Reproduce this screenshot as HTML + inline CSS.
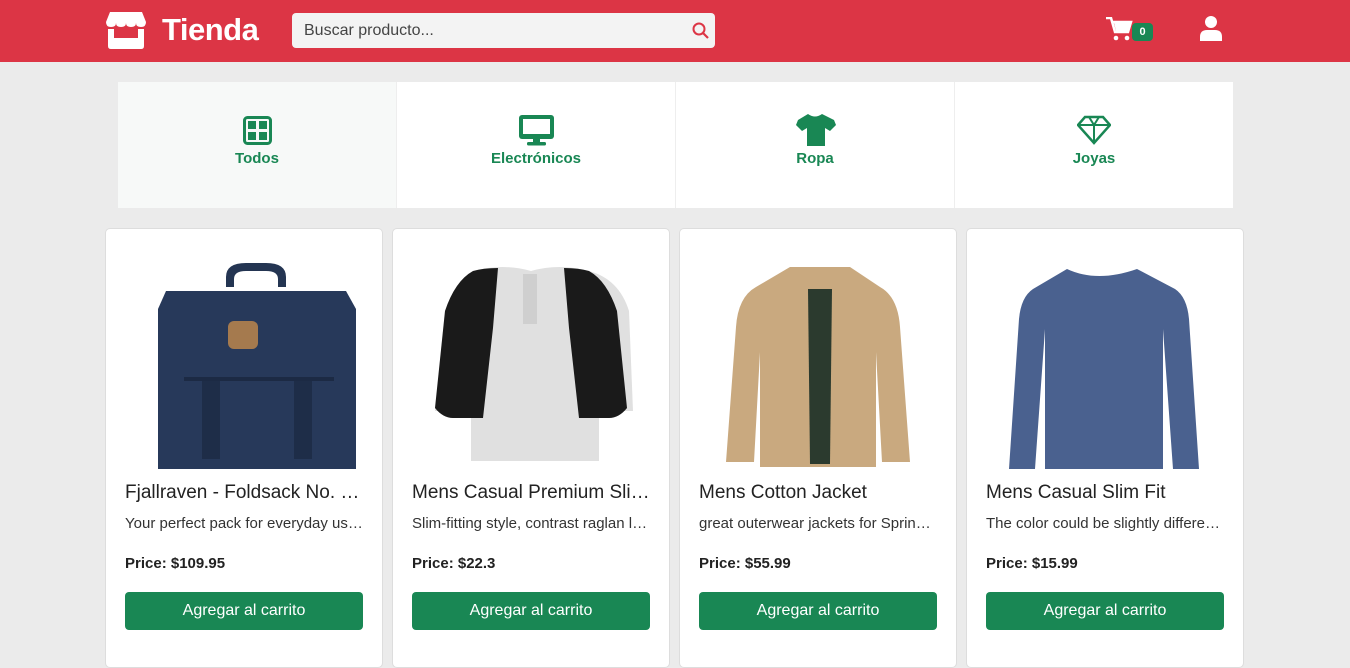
<!DOCTYPE html>
<html><head><meta charset="utf-8"><style>
*{box-sizing:border-box;margin:0;padding:0}
body{width:1350px;height:647px;overflow:hidden;background:#ebebeb;font-family:"Liberation Sans",sans-serif;position:relative}
.hdr{position:absolute;left:0;top:0;width:1350px;height:62px;background:#dc3545}
.logo{position:absolute;left:162px;top:12px;color:#fff;font-weight:bold;font-size:31px;letter-spacing:-0.5px}
.search{position:absolute;left:292px;top:13px;width:423px;height:35px;background:#f3f3f3;border-radius:4px;font-size:16px;color:#444;padding:9px 12px}
.cats{position:absolute;left:118px;top:82px;width:1115px;height:126px;background:#fff;display:flex}
.cat{flex:1;border-right:1px solid #eee;text-align:center;color:#198754;font-weight:bold;font-size:15px;padding-top:31px}
.cat:last-child{border:none}
.ic{height:34px;display:flex;justify-content:center;align-items:center;margin-bottom:3px}
.card{position:absolute;top:228px;width:278px;height:440px;background:#fff;border:1px solid #ddd;border-radius:5px}
.card .img{position:absolute;left:20px;top:30px;width:238px;height:210px}
.t{position:absolute;left:19px;top:253px;font-size:19px;color:#222;width:240px;white-space:nowrap;overflow:hidden;text-overflow:ellipsis}
.d{position:absolute;left:19px;top:286px;font-size:15px;color:#333;width:238px;white-space:nowrap;overflow:hidden;text-overflow:ellipsis}
.p{position:absolute;left:19px;top:326px;font-size:15px;font-weight:bold;color:#222}
.b{position:absolute;left:19px;top:363px;width:238px;height:38px;background:#198754;border-radius:4px;color:#fff;font-size:16px;text-align:center;line-height:38px}
</style></head><body>
<div class="hdr">
<svg style="position:absolute;left:106px;top:12px" width="40" height="37" viewBox="0 0 40 37"><path d="M4 0h32l4 10q0 5-5 5q-5 0-5-4q0 4-5 4q-5 0-5-4q0 4-5 4q-5 0-5-4q0 4-5 4q-5 0-5-5z" fill="#fff"/><path d="M2 17h6v9h24v-9h6v17q0 3-3 3H5q-3 0-3-3z" fill="#fff"/></svg>
<div class="logo">Tienda</div>
<div class="search">Buscar producto...<svg style="position:absolute;right:6px;top:9px" width="17" height="17" viewBox="0 0 17 17"><circle cx="7" cy="7" r="5.5" fill="none" stroke="#dc3545" stroke-width="2"/><path d="M11 11l5 5" stroke="#dc3545" stroke-width="2.2"/></svg></div>
<svg style="position:absolute;left:1106px;top:17px" width="28" height="24" viewBox="0 0 28 24"><path d="M0 1h5l4 14h13l3-10H7" fill="none" stroke="#fff" stroke-width="2.5"/><path d="M8 6h16l-2.5 8H10z" fill="#fff"/><circle cx="10" cy="21" r="2.3" fill="#fff"/><circle cx="21" cy="21" r="2.3" fill="#fff"/></svg>
<div style="position:absolute;left:1132px;top:23px;width:21px;height:18px;background:#198754;border-radius:4px;color:#fff;font-size:11px;font-weight:bold;text-align:center;line-height:18px">0</div>
<svg style="position:absolute;left:1200px;top:16px" width="22" height="25" viewBox="0 0 22 25"><circle cx="11" cy="6" r="6" fill="#fff"/><path d="M0 25v-4q0-7 7-7h8q7 0 7 7v4z" fill="#fff"/></svg>
</div>
<div class="cats">
<div class="cat" style="background:#f7f9f8"><div class="ic"><svg width="29" height="29" viewBox="0 0 29 29"><rect x="1.5" y="1.5" width="26" height="26" rx="3" fill="none" stroke="#198754" stroke-width="3"/><rect x="5" y="5" width="8" height="8" fill="#198754"/><rect x="16" y="5" width="8" height="8" fill="#198754"/><rect x="5" y="16" width="8" height="8" fill="#198754"/><rect x="16" y="16" width="8" height="8" fill="#198754"/></svg></div>Todos</div>
<div class="cat"><div class="ic"><svg width="37" height="32" viewBox="0 0 37 32"><rect x="1" y="1" width="35" height="24" rx="3" fill="#198754"/><rect x="5" y="5" width="27" height="15" fill="#fff"/><rect x="15" y="25" width="7" height="3" fill="#198754"/><rect x="9" y="28" width="19" height="3.5" rx="1.5" fill="#198754"/></svg></div>Electrónicos</div>
<div class="cat"><div class="ic"><svg width="42" height="32" viewBox="0 0 42 32"><path d="M14 0q7 5 14 0l12 6l2 5l-6 6l-5-3v18H13V14l-5 3l-6-6l2-5z" fill="#198754"/></svg></div>Ropa</div>
<div class="cat"><div class="ic"><svg width="34" height="30" viewBox="0 0 34 30"><path d="M8 2h18l7 8l-16 18L1 10z" fill="none" stroke="#198754" stroke-width="2.5"/><path d="M1 10h32M12 2l5 8l5-8M17 10v18" fill="none" stroke="#198754" stroke-width="2"/></svg></div>Joyas</div>
</div>

<div class="card" style="left:105px"><svg class="img" viewBox="0 0 238 210"><path d="M100 18q0-14 20-14h20q20 0 20 14v10h-8v-8q0-8-12-8h-20q-12 0-12 8v8h-8z" fill="#243552"/><path d="M40 32h180l10 18v160q0 5-10 5H42q-10 0-10-5V50z" fill="#27395a"/><rect x="102" y="62" width="30" height="28" rx="6" fill="#a57a4e"/><rect x="76" y="120" width="18" height="80" fill="#1e2d48"/><rect x="168" y="120" width="18" height="80" fill="#1e2d48"/><rect x="58" y="118" width="150" height="4" fill="#1c2a44"/></svg>
<div class="t">Fjallraven - Foldsack No. 1 Backpack</div><div class="d">Your perfect pack for everyday use and walks</div><div class="p">Price: $109.95</div><div class="b">Agregar al carrito</div></div>

<div class="card" style="left:392px"><svg class="img" viewBox="0 0 238 210"><path d="M60 12q30-8 58 0q28-8 58 0q30 8 40 40l4 100h-28l-6-60v110H58V92l-8 60H22l10-100q10-30 28-40z" fill="#e0e0e0"/><path d="M60 12q10-3 25-3l-5 60l-10 90H40q-10 0-18-10L32 52q10-30 28-40zM176 12q-10-3-25-3l5 60l10 90h30q10 0 18-10L204 52q-10-30-28-40z" fill="#1a1a1a"/><rect x="110" y="15" width="14" height="50" fill="#cfcfcf"/></svg>
<div class="t">Mens Casual Premium Slim Fit T-Shirts</div><div class="d">Slim-fitting style, contrast raglan long sleeve</div><div class="p">Price: $22.3</div><div class="b">Agregar al carrito</div></div>

<div class="card" style="left:679px"><svg class="img" viewBox="0 0 238 210"><path d="M90 8h60l30 20q18 10 20 40l10 135h-28l-6-110v115H60V93l-6 110H26L36 68q2-30 20-40z" fill="#c9a97f"/><path d="M108 30h24l-2 175h-20z" fill="#2b3a2e"/></svg>
<div class="t">Mens Cotton Jacket</div><div class="d">great outerwear jackets for Spring/Autumn/Winter</div><div class="p">Price: $55.99</div><div class="b">Agregar al carrito</div></div>

<div class="card" style="left:966px"><svg class="img" viewBox="0 0 238 210"><path d="M80 10q30 14 70 0l38 20q12 8 14 30l10 150h-26l-10-140v140H58V70L48 210H22L32 60q2-22 14-30z" fill="#4a618f"/></svg>
<div class="t">Mens Casual Slim Fit</div><div class="d">The color could be slightly different between on the screen</div><div class="p">Price: $15.99</div><div class="b">Agregar al carrito</div></div>
</body></html>
